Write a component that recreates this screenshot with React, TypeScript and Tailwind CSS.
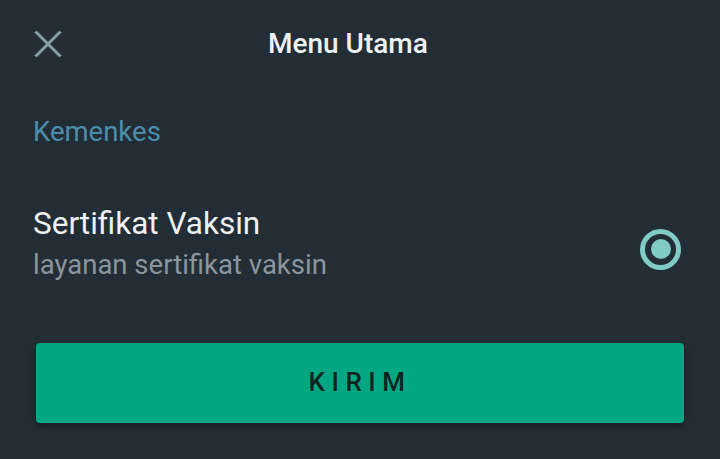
function CloseIcon() {
  return (
    <svg width="28" height="28" viewBox="0 0 28 28" fill="none" stroke="currentColor" strokeWidth="3">
      <path d="M1.5 1.5 26.5 26.5M26.5 1.5 1.5 26.5" />
    </svg>
  );
}

export default function App() {
  return (
    <div
      className="w-[720px] h-[459px] bg-[#222d36] overflow-hidden"
      style={{ fontFamily: "Roboto, 'Noto Sans', sans-serif" }}
    >
      {/* Toolbar */}
      <div className="h-[88px] flex items-center">
        <button className="ml-[34px] w-[28px] h-[28px] flex items-center justify-center text-[#8a9ea8]">
          <CloseIcon />
        </button>
        <h1 className="ml-[206px] text-[28px] font-medium text-[#eef1f2] leading-none">Menu Utama</h1>
      </div>

      {/* Section */}
      <div className="px-[33px] pt-[30px] text-[27.5px] leading-none text-[#4d8dab]">Kemenkes</div>

      {/* Option row */}
      <div className="mt-[57px] px-[33px] flex items-start justify-between">
        <div>
          <div className="text-[31.5px] leading-[42px] text-[#eef1f2]">Sertifikat Vaksin</div>
          <div className="text-[27.5px] leading-[40px] text-[#8a959d]">layanan sertifikat vaksin</div>
        </div>
        <div className="mt-[26px] mr-[6px] w-[41px] h-[41px] rounded-full border-[5px] border-[#80cbc4] flex items-center justify-center">
          <div className="w-[20px] h-[20px] rounded-full bg-[#80cbc4]" />
        </div>
      </div>

      {/* Submit */}
      <div className="px-[36px] pt-[58px]">
        <button className="w-full h-[80px] rounded-[4px] bg-[#03a883] shadow-[0_3px_6px_rgba(0,0,0,0.35)] text-[26px] font-medium tracking-[0.25em] text-[#0f2420]">
          KIRIM
        </button>
      </div>
    </div>
  );
}
